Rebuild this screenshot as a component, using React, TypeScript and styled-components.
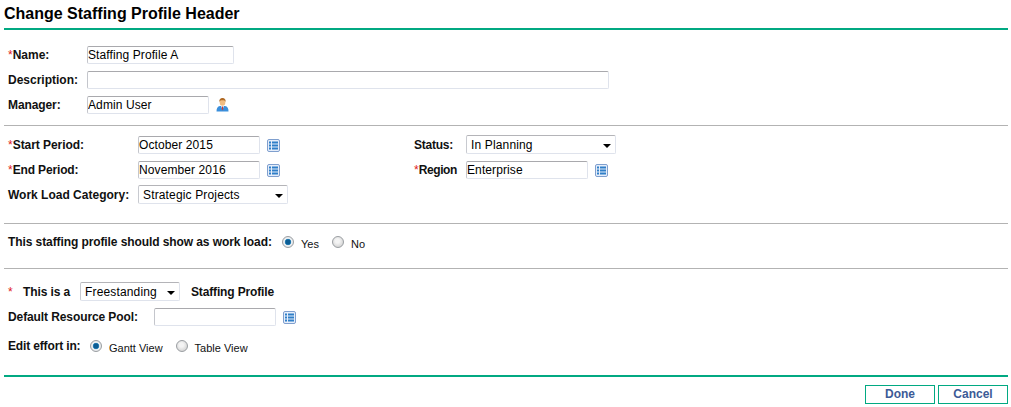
import React from 'react';
import styled, {createGlobalStyle} from 'styled-components';

const Global = createGlobalStyle`
  html, body { margin: 0; padding: 0; background: #fff; }
  body { font-family: "Liberation Sans", Arial, sans-serif; color: #000; }
`;

const Page = styled.div`
  width: 1011px;
  height: 407px;
  box-sizing: border-box;
  padding: 0 3px 0 4px;
  display: flex;
  flex-direction: column;
  overflow: hidden;
`;

const Title = styled.h1`
  margin: 0;
  height: 28px;
  line-height: 27px;
  font-size: 16px;
  font-weight: bold;
  color: #000;
`;

const AccentRule = styled.div`
  height: 2px;
  background: #01a982;
  flex: none;
`;

const Section = styled.section<{$height: number; $top: number}>`
  height: ${p => p.$height}px;
  box-sizing: border-box;
  padding: ${p => p.$top}px 0 0 4px;
  border-bottom: 1px solid #b3b3b3;
  flex: none;
  display: flex;
  flex-direction: column;
`;

const PlainSection = styled(Section)`
  border-bottom: none;
`;

const Row = styled.div<{$height?: number}>`
  display: flex;
  align-items: center;
  height: ${p => p.$height ?? 25}px;
`;

const Columns = styled.div`
  display: flex;
`;

const Column = styled.div<{$width: number}>`
  width: ${p => p.$width}px;
  flex: none;
`;

const Label = styled.label<{$width?: number; $track?: number; $indent?: number}>`
  display: block;
  flex: none;
  width: ${p => (p.$width ? `${p.$width}px` : 'auto')};
  margin-left: ${p => p.$indent ?? 0}px;
  font-size: 12px;
  font-weight: bold;
  letter-spacing: ${p => p.$track ?? -0.1}px;
  color: #111;
  white-space: nowrap;
`;

const Req = styled.span`
  color: #e02020;
  font-weight: normal;
  letter-spacing: 0;
`;

const ReqGap = styled(Req)`
  display: inline-block;
  width: 15px;
`;

const Field = styled.input<{$width: number}>`
  width: ${p => p.$width}px;
  height: 18px;
  box-sizing: border-box;
  padding: 0;
  border: 1px solid #dfe3ec;
  border-top-color: #a9a9ad;
  border-left-color: #c4c6cc;
  border-radius: 2px;
  font: 12px "Liberation Sans", Arial, sans-serif;
  letter-spacing: 0.1px;
  color: #000;
  background: #fff;
  outline: none;
`;

const SelectBox = styled.div<{$width: number}>`
  width: ${p => p.$width}px;
  height: 19px;
  box-sizing: border-box;
  padding: 0 4px 0 4px;
  border: 1px solid #dfe3ec;
  border-top-color: #b4b4b8;
  border-left-color: #c8cad0;
  border-radius: 2px;
  display: flex;
  align-items: center;
  justify-content: space-between;
  font-size: 12px;
  letter-spacing: 0.15px;
  color: #000;
`;

const Arrow = styled.span`
  width: 0;
  height: 0;
  margin-top: 2px;
  border-left: 4px solid transparent;
  border-right: 4px solid transparent;
  border-top: 4px solid #000;
`;

const IconSlot = styled.span`
  display: inline-flex;
  margin-left: 7px;
`;

const LookupSlot = styled(IconSlot)`
  margin-top: 2px;
`;

const RadioDot = styled.span<{$on?: boolean}>`
  width: 12px;
  height: 12px;
  flex: none;
  box-sizing: border-box;
  border-radius: 50%;
  border: 1px solid #9a9ea2;
  background: ${p =>
    p.$on
      ? 'radial-gradient(circle at 50% 50%, #0b5c94 0 2.2px, #3f93c4 3px, #f1f3f5 3.6px, #d2d5d8 100%)'
      : 'radial-gradient(circle at 45% 40%, #f4f4f4 0 2px, #c6c6c6 100%)'};
`;

const RadioText = styled.span`
  font-size: 11px;
  color: #111;
  margin: 2px 13px 0 7px;
  position: relative;
  top: 1px;
`;

const Actions = styled.div`
  display: flex;
  justify-content: flex-end;
  gap: 3px;
  padding-top: 8px;
`;

const ActionButton = styled.button`
  width: 70px;
  height: 19px;
  padding: 0 0 2px;
  box-sizing: border-box;
  border: 1px solid #01a982;
  background: #fff;
  color: #3c5a96;
  font: bold 12px "Liberation Sans", Arial, sans-serif;
`;

const Calendar = () => (
  <svg width="13" height="13" viewBox="0 0 13 13">
    <rect x="0.5" y="0.5" width="12" height="12" rx="1.5" fill="#e6eefa" stroke="#7f9fce" />
    <rect x="2" y="2.500" width="2" height="2" fill="#2f7fc8" />
    <rect x="2" y="5.500" width="2" height="2" fill="#2f7fc8" />
    <rect x="2" y="8.500" width="2" height="2" fill="#2f7fc8" />
    <rect x="5" y="2.500" width="6" height="2" fill="#2f7fc8" />
    <rect x="5" y="5.500" width="6" height="2" fill="#2f7fc8" />
    <rect x="5" y="8.500" width="6" height="2" fill="#2f7fc8" />
  </svg>
);

const Person = () => (
  <svg width="13" height="15" viewBox="0 0 13 15">
    <path d="M0.500 14.500c0-3.500 1-5 3.500-5.500h5c2.500.5 3.500 2 3.500 5.500z" fill="#3a8fdc" />
    <path d="M5 9h3l-1.500 4z" fill="#eef2f6" />
    <path d="M6 9.500h1l.3 2.500-.8 1.500-.8-1.500z" fill="#c8383a" />
    <ellipse cx="6.500" cy="5.500" rx="2.800" ry="3.300" fill="#f2bd82" />
    <path d="M3.400 5c-.4-3 1.400-4 3.100-4s3.500 1 3.100 4c-.5-1.300-1.400-1.700-3.100-1.700s-2.600.4-3.100 1.700z" fill="#b06a24" />
  </svg>
);

const Lookup = () => (
  <LookupSlot>
    <Calendar />
  </LookupSlot>
);

export default function App() {
  return (
    <Page>
      <Global />
      <Title>Change Staffing Profile Header</Title>
      <AccentRule />
      <Section $height={96} $top={12}>
        <Row>
          <Label $width={79} $track={0}><Req>*</Req>Name:</Label>
          <Field $width={147} defaultValue="Staffing Profile A" />
        </Row>
        <Row>
          <Label $width={79} $track={0}>Description:</Label>
          <Field $width={522} />
        </Row>
        <Row>
          <Label $width={79}>Manager:</Label>
          <Field $width={122} defaultValue="Admin User" />
          <IconSlot><Person /></IconSlot>
        </Row>
      </Section>
      <Section $height={98} $top={6}>
        <Columns>
          <Column $width={406}>
            <Row>
              <Label $width={130} $track={-0.05}><Req>*</Req>Start Period:</Label>
              <Field $width={122} defaultValue="October 2015" />
              <Lookup />
            </Row>
            <Row>
              <Label $width={130} $track={-0.15}><Req>*</Req>End Period:</Label>
              <Field $width={122} defaultValue="November 2016" />
              <Lookup />
            </Row>
            <Row>
              <Label $width={130} $track={0}>Work Load Category:</Label>
              <SelectBox $width={150}>Strategic Projects<Arrow /></SelectBox>
            </Row>
          </Column>
          <Column $width={300}>
            <Row>
              <Label $width={52} $track={-0.25}>Status:</Label>
              <SelectBox $width={150}>In Planning<Arrow /></SelectBox>
            </Row>
            <Row>
              <Label $width={52} $track={-0.4}><Req>*</Req>Region</Label>
              <Field $width={122} defaultValue="Enterprise" />
              <Lookup />
            </Row>
          </Column>
        </Columns>
      </Section>
      <Section $height={45} $top={5}>
        <Row>
          <Label $width={274} $track={-0.09}>This staffing profile should show as work load:</Label>
          <RadioDot $on />
          <RadioText>Yes</RadioText>
          <RadioDot />
          <RadioText>No</RadioText>
        </Row>
      </Section>
      <PlainSection $height={106} $top={10}>
        <Row>
          <Label $width={72}><ReqGap>*</ReqGap>This is a</Label>
          <SelectBox $width={100}>Freestanding<Arrow /></SelectBox>
          <Label $indent={11} $track={-0.15}>Staffing Profile</Label>
        </Row>
        <Row>
          <Label $width={146}>Default Resource Pool:</Label>
          <Field $width={122} />
          <Lookup />
        </Row>
        <Row $height={34}>
          <Label $width={82} $track={-0.15}>Edit effort in:</Label>
          <RadioDot $on />
          <RadioText>Gantt View</RadioText>
          <RadioDot />
          <RadioText>Table View</RadioText>
        </Row>
      </PlainSection>
      <AccentRule />
      <Actions>
        <ActionButton>Done</ActionButton>
        <ActionButton>Cancel</ActionButton>
      </Actions>
    </Page>
  );
}
